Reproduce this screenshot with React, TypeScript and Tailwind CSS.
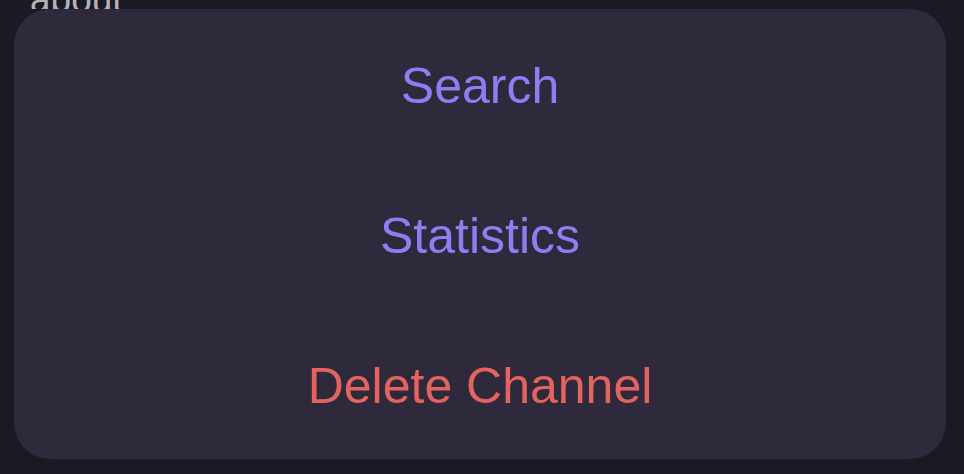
import React from 'react'

const actions = [
  { label: 'Search', tone: 'text-[#8f7ef2]' },
  { label: 'Statistics', tone: 'text-[#8f7ef2]' },
  { label: 'Delete Channel', tone: 'text-[#e3635f]' },
]

export default function App() {
  return (
    <div className="w-[964px] h-[474px] bg-[#1b1924] overflow-hidden flex flex-col font-['Liberation_Sans',Arial,sans-serif]">
      {/* text of the screen behind the sheet, cut off at the top */}
      <div className="h-[9px] overflow-hidden pl-[30px]">
        <div className="-mt-[19px] text-[37px] leading-none text-[#b4b3bc]">about</div>
      </div>
      <div className="mx-[14px] w-[932px] h-[450px] rounded-[36px] bg-[#2e2a3c] flex flex-col overflow-hidden">
        {actions.map((a, i) => (
          <button
            key={a.label}
            className={`flex-1 flex items-center justify-center pt-[4px] text-[50px] leading-none ${a.tone} ${
              i > 0 ? 'border-t border-[#28253a]' : ''
            }`}
          >
            {a.label}
          </button>
        ))}
      </div>
    </div>
  )
}
